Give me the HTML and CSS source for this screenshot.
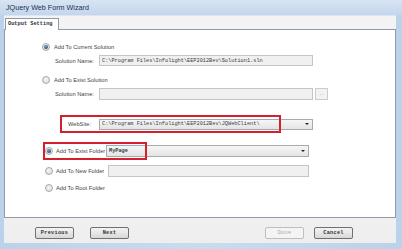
FILE: index.html
```html
<!DOCTYPE html>
<html>
<head>
<meta charset="utf-8">
<link rel="stylesheet" href="styles.css">
</head>
<body>
<div class="window">
  <div class="titlebar">JQuery Web Form Wizard</div>
  <div class="client">
    <div class="tabstrip"><div class="tab">Output Setting</div></div>
    <div class="panel">
      <div class="row row1 sol">
        <span class="radio checked"></span><span class="lbl">Add To Current Solution</span>
      </div>
      <div class="row row2 field">
        <span class="flbl">Solution Name:</span>
        <div class="box ro mono">C:\Program Files\Infolight\EEP2012Bev\Solution1.sln</div>
      </div>
      <div class="row row3 sol">
        <span class="radio"></span><span class="lbl">Add To Exist Solution</span>
      </div>
      <div class="row row4 field">
        <span class="flbl">Solution Name:</span>
        <div class="box ro"></div>
        <div class="dots">...</div>
      </div>
      <div class="row row5 field hl hl-web">
        <span class="flbl web">WebSite:</span>
        <div class="box sel mono"><span class="val">C:\Program Files\Infolight\EEP2012Bev\JQWebClient\</span><span class="arrow"></span></div>
      </div>
      <div class="row row6 fold hl hl-fold">
        <span class="radio checked"></span><span class="lbl flw">Add To Exist Folder</span>
        <div class="box sel mono wide"><span class="val b">MyPage</span><span class="arrow"></span></div>
      </div>
      <div class="row row7 fold">
        <span class="radio"></span><span class="lbl flw">Add To New Folder</span>
        <div class="box ro wide2"></div>
      </div>
      <div class="row row8 fold">
        <span class="radio"></span><span class="lbl">Add To Root Folder</span>
      </div>
    </div>
    <div class="footer">
      <button class="btn prev">Previous</button>
      <button class="btn next">Next</button>
      <span class="spacer"></span>
      <button class="btn done" disabled>Done</button>
      <button class="btn cancel">Cancel</button>
    </div>
  </div>
</div>
</body>
</html>
```

FILE: styles.css
```css
html, body {
  margin: 0;
  padding: 0;
}
body {
  width: 402px;
  height: 249px;
  overflow: hidden;
  font-family: "Liberation Sans", Arial, sans-serif;
}
.window {
  width: 402px;
  height: 249px;
  display: flex;
  flex-direction: column;
  background: linear-gradient(to right, #bcd2ea 0, #c9dbef 50%, #bcd2ea 100%);
}
.titlebar {
  height: 15px;
  box-sizing: border-box;
  padding: 3px 0 0 6px;
  font-size: 7.2px;
  line-height: 9px;
  color: #1b2f4d;
  background: linear-gradient(to bottom, #d7e4f3 0, #c3d6ec 100%);
}
.client {
  flex: 1;
  margin: 0 6px 6px 4px;
  display: flex;
  flex-direction: column;
  background: #f0f0f0;
}
.tabstrip {
  height: 14px;
  display: flex;
  align-items: flex-end;
  background: #f3f3f3;
  border-top: 1px solid #dde6f0;
  box-sizing: border-box;
}
.tab {
  margin-left: 1px;
  width: 54px;
  height: 12px;
  box-sizing: border-box;
  background: #fff;
  border: 1px solid #8d9aab;
  border-bottom: none;
  font-family: "Liberation Mono", monospace;
  font-weight: bold;
  font-size: 5.3px;
  line-height: 11px;
  padding-left: 2px;
  color: #333;
  position: relative;
  top: 1px;
}
.panel {
  height: 189px;
  box-sizing: border-box;
  background: #fff;
  border: 1px solid #8d9aab;
  display: flex;
  flex-direction: column;
}
.row {
  display: flex;
  align-items: center;
  position: relative;
}
.row1 { margin-top: 12px; height: 10px; }
.row2 { margin-top: 3px; height: 11px; }
.row3 { margin-top: 9px; height: 10px; }
.row4 { margin-top: 3px; height: 12px; }
.row5 { margin-top: 15px; height: 18px; }
.row6 { margin-top: 9px; height: 18px; }
.row7 { margin-top: 5px; height: 12px; }
.row8 { margin-top: 6px; height: 10px; }

.sol { padding-left: 37px; }
.fold { padding-left: 40px; }
.field { padding-left: 50px; }

.radio {
  width: 8px;
  height: 8px;
  box-sizing: border-box;
  border-radius: 50%;
  border: 1px solid #a4a8ad;
  background: radial-gradient(circle at 50% 40%, #f6f6f6 0, #d8d8d8 100%);
  position: relative;
  flex: none;
}
.radio.checked::after {
  content: "";
  position: absolute;
  left: 1px;
  top: 1px;
  width: 4px;
  height: 4px;
  border-radius: 50%;
  background: radial-gradient(circle at 40% 35%, #7a9cc8 0, #23456e 80%);
}
.lbl {
  margin-left: 4px;
  font-size: 5.7px;
  color: #444;
  white-space: nowrap;
}
.flw { width: 50px; flex: none; }
.fold .lbl { margin-left: 3px; }
.flbl {
  font-size: 5.7px;
  color: #444;
  width: 44px;
  flex: none;
  white-space: nowrap;
}
.flbl.web { padding-left: 13px; width: 31px; }
.box {
  width: 214px;
  height: 11px;
  box-sizing: border-box;
  border: 1px solid #c2c5c9;
  background: #f0f0f0;
  display: flex;
  align-items: center;
  flex: none;
}
.row4 .box { height: 12px; }
.mono {
  font-family: "Liberation Mono", monospace;
  font-size: 5.25px;
  color: #3a3a3a;
  padding-left: 2px;
  white-space: nowrap;
  overflow: hidden;
}
.sel {
  background: linear-gradient(to bottom, #f6f6f6 0, #e4e4e4 100%);
  border-color: #a7abb0;
  justify-content: space-between;
  padding-right: 3px;
}
.val.b { font-weight: bold; }
.arrow {
  width: 0;
  height: 0;
  border-left: 2px solid transparent;
  border-right: 2px solid transparent;
  border-top: 2px solid #222;
  flex: none;
}
.wide { width: 203px; margin-left: 0; }
.row6 .box { height: 12px; }
.wide2 { width: 201px; margin-left: 2px; height: 12px; }
.dots {
  margin-left: 2px;
  width: 13px;
  height: 12px;
  box-sizing: border-box;
  border: 1px solid #c8cbcf;
  background: #f2f2f2;
  font-size: 5px;
  color: #999;
  text-align: center;
  line-height: 8px;
}
.hl::before {
  content: "";
  position: absolute;
  top: 0;
  height: 18px;
  box-sizing: border-box;
  border: 2px solid #d41f2d;
  pointer-events: none;
}
.hl-web::before { left: 55px; width: 221px; }
.hl-fold::before { left: 38px; width: 104px; }

.footer {
  flex: 1;
  display: flex;
  align-items: flex-start;
  padding: 9px 43px 0 31px;
  background: linear-gradient(to bottom, #f0f0f0 0, #eeeeee 100%);
}
.btn {
  width: 39px;
  height: 12px;
  box-sizing: border-box;
  margin: 0;
  padding: 0;
  border: 1px solid #707070;
  border-radius: 2px;
  background: linear-gradient(to bottom, #f3f3f3 0, #e6e6e6 50%, #d8d8d8 100%);
  font-family: "Liberation Mono", monospace;
  font-weight: bold;
  font-size: 5.2px;
  letter-spacing: 0.3px;
  color: #333;
  line-height: 10px;
}
.next { margin-left: 16px; }
.spacer { flex: 1; }
.done {
  border-color: #bfbfbf;
  background: #f4f4f4;
  color: #a8a8a8;
  font-weight: normal;
}
.cancel { margin-left: 10px; }
```
